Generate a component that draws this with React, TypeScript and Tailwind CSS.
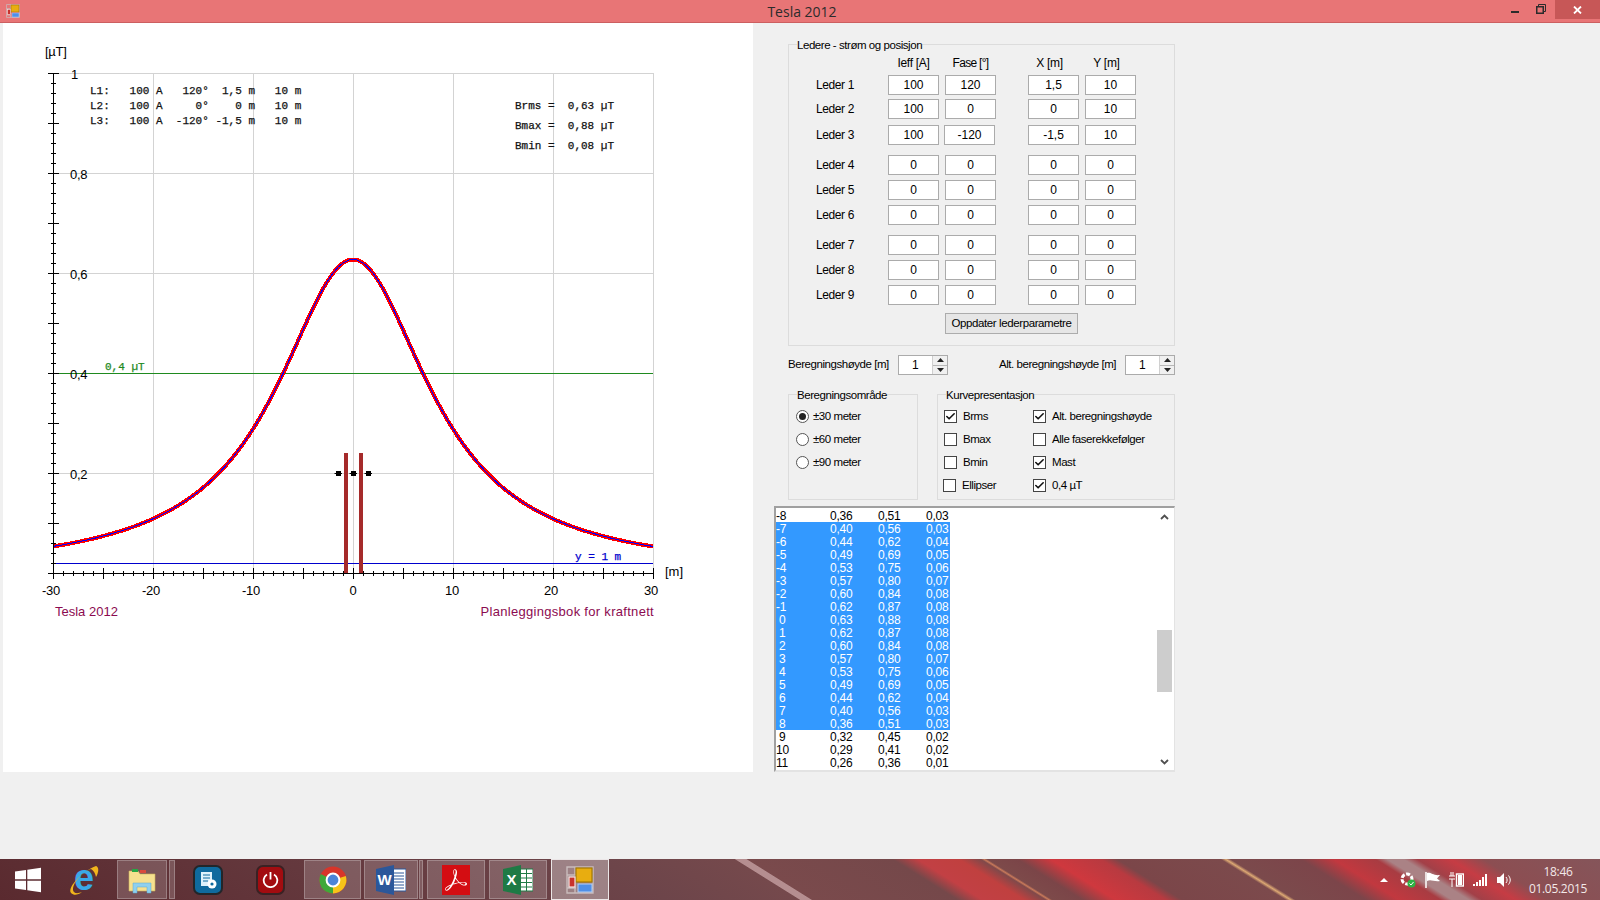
import { Check } from 'lucide-react'
import { SiAdobeacrobatreader } from 'react-icons/si'

const sans = "font-['Liberation_Sans',Arial,sans-serif]"

const leaders = [
  { name: 'Leder 1', h: 'h-[24px]', v: ['100', '120', '1,5', '10'] },
  { name: 'Leder 2', h: 'h-[26px]', v: ['100', '0', '0', '10'] },
  { name: 'Leder 3', h: 'h-[30px]', v: ['100', '-120', '-1,5', '10'] },
  { name: 'Leder 4', h: 'h-[25px]', v: ['0', '0', '0', '0'] },
  { name: 'Leder 5', h: 'h-[25px]', v: ['0', '0', '0', '0'] },
  { name: 'Leder 6', h: 'h-[30px]', v: ['0', '0', '0', '0'] },
  { name: 'Leder 7', h: 'h-[25px]', v: ['0', '0', '0', '0'] },
  { name: 'Leder 8', h: 'h-[25px]', v: ['0', '0', '0', '0'] },
  { name: 'Leder 9', h: 'h-[28px]', v: ['0', '0', '0', '0'] },
]

const rows = [
  ['-8', '0,36', '0,51', '0,03'],
  ['-7', '0,40', '0,56', '0,03'],
  ['-6', '0,44', '0,62', '0,04'],
  ['-5', '0,49', '0,69', '0,05'],
  ['-4', '0,53', '0,75', '0,06'],
  ['-3', '0,57', '0,80', '0,07'],
  ['-2', '0,60', '0,84', '0,08'],
  ['-1', '0,62', '0,87', '0,08'],
  ['0', '0,63', '0,88', '0,08'],
  ['1', '0,62', '0,87', '0,08'],
  ['2', '0,60', '0,84', '0,08'],
  ['3', '0,57', '0,80', '0,07'],
  ['4', '0,53', '0,75', '0,06'],
  ['5', '0,49', '0,69', '0,05'],
  ['6', '0,44', '0,62', '0,04'],
  ['7', '0,40', '0,56', '0,03'],
  ['8', '0,36', '0,51', '0,03'],
  ['9', '0,32', '0,45', '0,02'],
  ['10', '0,29', '0,41', '0,02'],
  ['11', '0,26', '0,36', '0,01'],
]

// field strength from three conductors, same maths as the program
function brms(x: number) {
  const cond = [
    { x: 1.5, ph: 120 },
    { x: 0, ph: 0 },
    { x: -1.5, ph: -120 },
  ]
  let xr = 0, xi = 0, yr = 0, yi = 0
  for (const c of cond) {
    const dx = x - c.x
    const dy = 9
    const r2 = dx * dx + dy * dy
    const k = (0.2 * 100) / r2
    const a = (c.ph * Math.PI) / 180
    xr += k * dy * Math.cos(a)
    xi += k * dy * Math.sin(a)
    yr += k * dx * Math.cos(a)
    yi += k * dx * Math.sin(a)
  }
  return Math.sqrt(xr * xr + xi * xi + yr * yr + yi * yi)
}

function curvePath() {
  let d = ''
  for (let x = -30; x <= 30; x += 0.25) {
    const px = 53 + (x + 30) * 10
    const py = 573 - brms(x) * 500
    d += (d ? 'L' : 'M') + px.toFixed(1) + ' ' + py.toFixed(1)
  }
  return d
}

function Chart() {
  const gx = [153, 253, 353, 453, 553, 653]
  const gy = [73, 173, 273, 373, 473]
  const xTicks = Array.from({ length: 61 }, (_, i) => 53 + i * 10)
  const yTicks = Array.from({ length: 51 }, (_, i) => 73 + i * 10)
  const lbl = { fontFamily: 'Liberation Sans, Arial, sans-serif', fontSize: 13, letterSpacing: -0.3, fill: '#000' }
  const mono = { fontFamily: 'Liberation Mono, monospace', fontSize: 11, fill: '#111', stroke: '#111', strokeWidth: 0.25 }
  const foot = { fontFamily: 'Liberation Sans, Arial, sans-serif', fontSize: 13, fill: '#8b0a50' }
  return (
    <svg width="750" height="749" viewBox="3 23 750 749" className="block">
      {gx.map((x) => <line key={x} x1={x + 0.5} y1="73" x2={x + 0.5} y2="573" stroke="#d3d3d3" />)}
      {gy.map((y) => <line key={y} x1="53" y1={y + 0.5} x2="654" y2={y + 0.5} stroke="#d3d3d3" />)}

      <line x1="53" y1="373.5" x2="653" y2="373.5" stroke="#1f8a1f" />
      <line x1="53" y1="563.5" x2="653" y2="563.5" stroke="#0000cd" />

      <path d={curvePath()} fill="none" stroke="#ff0000" strokeWidth="4" shapeRendering="crispEdges" />
      <path d={curvePath()} fill="none" stroke="#0000ff" strokeWidth="1" shapeRendering="crispEdges" />

      <rect x="344" y="453" width="4" height="120" fill="#a52a2a" />
      <rect x="359" y="453" width="4" height="120" fill="#a52a2a" />
      {[338, 353, 368].map((x) => (
        <g key={x}>
          <rect x={x - 2} y="471" width="5" height="5" fill="#000" />
          <line x1={x - 3.5} y1="473.5" x2={x + 4} y2="473.5" stroke="#000" />
        </g>
      ))}

      <line x1="53.5" y1="73" x2="53.5" y2="574" stroke="#000" />
      <line x1="48" y1="573.5" x2="654" y2="573.5" stroke="#000" />
      {yTicks.map((y, i) => (
        <line key={y} x1={i % 5 === 0 ? 48 : 51} x2={i % 5 === 0 ? 59 : 56} y1={y + 0.5} y2={y + 0.5} stroke="#000" />
      ))}
      {xTicks.map((x, i) => (
        <line key={x} x1={x + 0.5} x2={x + 0.5} y1={i % 5 === 0 ? 568 : 571} y2={i % 5 === 0 ? 579 : 576} stroke="#000" />
      ))}

      <text x="45" y="56" style={lbl}>[µT]</text>
      <text x="71" y="79" style={lbl}>1</text>
      <text x="70" y="179" style={lbl}>0,8</text>
      <text x="70" y="279" style={lbl}>0,6</text>
      <text x="70" y="379" style={lbl}>0,4</text>
      <text x="70" y="479" style={lbl}>0,2</text>

      {[-30, -20, -10, 0, 10, 20, 30].map((v, i) => (
        <text key={v} x={v === 0 ? 353 : v === 10 ? 452 : 51 + i * 100} y="595" textAnchor="middle" style={lbl}>{v}</text>
      ))}
      <text x="665" y="576" style={{ ...lbl, letterSpacing: 0 }}>[m]</text>

      <text x="55" y="616" style={foot}>Tesla 2012</text>
      <text x="654" y="616" textAnchor="end" style={{ ...foot, letterSpacing: 0.3 }}>Planleggingsbok for kraftnett</text>

      <text x="90" y="94" xmlSpace="preserve" style={mono}>{'L1:   100 A   120°  1,5 m   10 m'}</text>
      <text x="90" y="109" xmlSpace="preserve" style={mono}>{'L2:   100 A     0°    0 m   10 m'}</text>
      <text x="90" y="124" xmlSpace="preserve" style={mono}>{'L3:   100 A  -120° -1,5 m   10 m'}</text>

      <text x="515" y="109" xmlSpace="preserve" style={mono}>{'Brms =  0,63 µT'}</text>
      <text x="515" y="129" xmlSpace="preserve" style={mono}>{'Bmax =  0,88 µT'}</text>
      <text x="515" y="149" xmlSpace="preserve" style={mono}>{'Bmin =  0,08 µT'}</text>

      <text x="105" y="370" style={{ ...mono, fill: '#1f8a1f', stroke: '#1f8a1f' }}>0,4 µT</text>
      <text x="575" y="560" style={{ ...mono, fill: '#0000cd', stroke: '#0000cd' }}>y = 1 m</text>
    </svg>
  )
}

function Field({ value, className = '' }: { value: string; className?: string }) {
  return (
    <div className={`w-[51px] h-[20px] bg-white border border-[#ababab] flex items-center justify-center text-[12px] text-black ${className}`}>
      {value}
    </div>
  )
}

function Spin({ value }: { value: string }) {
  return (
    <div className="w-[50px] h-[20px] bg-white border border-[#ababab] flex items-center">
      <span className="w-[32px] text-center text-[12px]">{value}</span>
      <div className="ml-auto w-[15px] h-full flex flex-col border-l border-[#d0d0d0] bg-[#f0f0f0]">
        <span className="flex-1 flex items-center justify-center border-b border-[#b8b8b8]">
          <svg width="7" height="4"><path d="M3.5 0L7 4H0z" fill="#222" /></svg>
        </span>
        <span className="flex-1 flex items-center justify-center">
          <svg width="7" height="4"><path d="M0 0H7L3.5 4z" fill="#222" /></svg>
        </span>
      </div>
    </div>
  )
}

function Radio({ label, on }: { label: string; on?: boolean }) {
  return (
    <div className="h-[23px] flex items-center gap-[4px] text-[11.5px]">
      <span className="w-[13px] h-[13px] rounded-full border border-[#555] bg-white flex items-center justify-center">
        {on && <span className="w-[7px] h-[7px] rounded-full bg-[#222]" />}
      </span>
      {label}
    </div>
  )
}

function Box({ label, on, className = '' }: { label: string; on?: boolean; className?: string }) {
  return (
    <div className={`h-[23px] flex items-center gap-[6px] text-[11.5px] whitespace-nowrap ${className}`}>
      <span className="w-[13px] h-[13px] border border-[#444] bg-white flex items-center justify-center">
        {on && <Check size={11} strokeWidth={3.5} color="#111" />}
      </span>
      {label}
    </div>
  )
}

function AppGlyph({ size }: { size: number }) {
  return (
    <svg width={size} height={size} viewBox="0 0 14 14">
      <path d="M.5 .5H13.5V13.5H.5zM.5 4.5H6M4.5 .5V4.5M.5 11H5M4.5 11V13.5M7 11H13.5" fill="none" stroke="#c9bcbc" strokeWidth=".7" />
      <rect x="5" y="1" width="8" height="7" fill="#e8ad10" stroke="#a57a00" strokeWidth=".6" />
      <rect x="1.5" y="5.5" width="3" height="5" fill="#c9322c" stroke="#f5e5e5" strokeWidth=".6" />
      <rect x="6" y="9" width="7" height="4" fill="#4f8fe8" stroke="#b7d0f2" strokeWidth=".5" />
    </svg>
  )
}

function TitleBar() {
  return (
    <div className="h-[23px] bg-[#e87576] border-b border-[#cc5f60] flex items-center relative">
      <span className="ml-[6px]"><AppGlyph size={14} /></span>
      <span className="absolute left-0 right-0 pl-[4px] text-center text-[14px] text-[#2b2b2b] font-['Open_Sans',sans-serif]">Tesla 2012</span>
      <div className="ml-auto flex items-center h-full relative">
        <span className="w-[8px] h-[2px] bg-[#2b2b2b] mr-[17px] mt-[2px]" />
        <svg className="mr-[9px] mb-[4px]" width="10" height="10" viewBox="0 0 10 10">
          <path d="M2.5 2.5V.5H9.5V7.5H8" fill="none" stroke="#2b2b2b" />
          <rect x=".75" y="2.75" width="6.5" height="6.5" fill="none" stroke="#2b2b2b" strokeWidth="1.5" />
        </svg>
        <div className="w-[45px] h-[19px] self-start bg-[#c75757] flex items-center justify-center">
          <svg width="9" height="8" viewBox="0 0 9 8"><path d="M1 .5L8 7.5M8 .5L1 7.5" stroke="#fff" strokeWidth="1.8" /></svg>
        </div>
      </div>
    </div>
  )
}

const pinned = 'h-[39px] bg-[#ffffff2b] border border-[#ffffff40] flex items-center justify-center'

function Taskbar() {
  return (
    <div className="h-[41px] flex items-center bg-[linear-gradient(32deg,#5a2a2f_0%,#6d454a_40%,#75494c_48%,#b58e90_48.1%,#b58e90_48.7%,#7a4a4c_48.8%,#75484a_57.5%,#c24044_59%,#c0403f_61.5%,#80494a_62.8%,#c8795a_63%,#7d4a4a_63.2%,#7b4548_65%,#cf383e_67%,#b83a40_70%,#7b4649_71%,#7c4a4c_77.2%,#dca873_77.5%,#7b4a4c_77.8%,#7c454a_82%,#c2383f_84%,#a83c42_86.5%,#aa8285_87.2%,#aa8285_88.2%,#a24048_89%,#c63c44_91%,#8c4e52_93%,#85555a_100%)]">
      <div className="w-[56px] flex justify-center">
        <svg width="26" height="26" viewBox="0 0 26 26">
          <path d="M0 4.5L11 3V12.3H0zM12.3 2.8L26 .8V12.3H12.3zM0 13.7H11V23L0 21.5zM12.3 13.7H26V25.2L12.3 23.2z" fill="#fff" />
        </svg>
      </div>
      <div className="w-[56px] flex justify-center">
        <svg className="overflow-visible" width="32" height="32" viewBox="0 0 32 32">
          <text x="16" y="26" textAnchor="middle" fontFamily="Liberation Sans" fontWeight="700" fontSize="36" fill="#39a9e8">e</text>
          <path d="M3 29C-1 23 15 7 28 2c3 1 3 6 0 11-1-4-2-6-5-8C12 9 2 23 6 28c2 2 5 1 8 0-4 3-8 4-11 1z" fill="#f1b51c" />
        </svg>
      </div>
      <div className={`w-[50px] ml-[5px] ${pinned}`}>
        <svg width="28" height="28" viewBox="0 0 28 28">
          <path d="M1 5H10L12 8H27V25H1z" fill="#f6e08f" stroke="#cdb35a" strokeWidth=".6" />
          <rect x="4" y="3" width="6" height="3" fill="#27a745" />
          <rect x="12" y="4" width="6" height="3" fill="#d94a3d" />
          <path d="M5 27V17H23V27H19V21H9V27z" fill="#8fd0ee" stroke="#5aa8d0" strokeWidth=".5" />
        </svg>
      </div>
      <span className={`w-[6px] ml-[2px] ${pinned}`} />
      <div className="w-[62px] ml-[2px] flex justify-center">
        <div className="w-[30px] h-[30px] rounded-[7px] bg-[#0f6a9e] border-[2px] border-[#22262a] flex items-center justify-center">
          <svg width="20" height="20" viewBox="0 0 20 20">
            <rect x="3" y="2" width="11" height="14" fill="#dff2fb" />
            <path d="M5 5H12M5 8H12M5 11H10" stroke="#0f6a9e" />
            <circle cx="14" cy="14" r="4.5" fill="#fff" />
            <circle cx="14" cy="14" r="1.6" fill="#0f6a9e" />
          </svg>
        </div>
      </div>
      <div className="w-[62px] flex justify-center">
        <div className="w-[29px] h-[30px] rounded-[7px] bg-[#a30c10] border-[2px] border-[#3a2224] flex items-center justify-center">
          <svg width="17" height="17" viewBox="0 0 17 17">
            <path d="M5 3.5a6.8 6.8 0 1 0 7 0" fill="none" stroke="#fff" strokeWidth="1.8" />
            <path d="M8.5 1V8.5" stroke="#fff" strokeWidth="1.8" />
          </svg>
        </div>
      </div>
      <div className={`w-[57px] ml-[3px] ${pinned}`}>
        <svg width="28" height="28" viewBox="0 0 28 28">
          <circle cx="14" cy="14" r="13.5" fill="#d8352a" />
          <path d="M14 14L26.8 10A13.5 13.5 0 0 1 14 27.5z" fill="#f6c419" />
          <path d="M14 14L14 27.5A13.5 13.5 0 0 1 1.8 8z" fill="#3fa83a" />
          <circle cx="14" cy="14" r="6.4" fill="#4b84d8" stroke="#fff" strokeWidth="2" />
        </svg>
      </div>
      <div className={`w-[54px] ml-[3px] ${pinned}`}>
        <svg width="30" height="30" viewBox="0 0 30 30">
          <rect x="11" y="4" width="19" height="22" fill="#fff" stroke="#2b579a" />
          <path d="M18 8H28M18 11H28M18 14H28M18 17H28M18 20H28M18 23H28" stroke="#2b579a" />
          <path d="M0 4L18 0V30L0 26z" fill="#2b579a" />
          <text x="8.5" y="20" textAnchor="middle" fontFamily="Liberation Sans" fontWeight="700" fontSize="15" fill="#fff">W</text>
        </svg>
      </div>
      <span className={`w-[4px] ml-[1px] ${pinned}`} />
      <div className={`w-[58px] ml-[4px] ${pinned}`}>
        <div className="w-[28px] h-[30px] bg-[#d40d12] flex items-center justify-center">
          <SiAdobeacrobatreader size={22} color="#fff" />
        </div>
      </div>
      <div className={`w-[58px] ml-[4px] ${pinned}`}>
        <svg width="30" height="30" viewBox="0 0 30 30">
          <rect x="11" y="4" width="19" height="22" fill="#fff" stroke="#1f7a45" />
          <path d="M18 8.5H29M18 13H29M18 17.5H29M18 22H29M23.5 4V26" stroke="#1f7a45" />
          <path d="M0 4L18 0V30L0 26z" fill="#1f7a45" />
          <text x="8.5" y="20" textAnchor="middle" fontFamily="Liberation Sans" fontWeight="700" fontSize="15" fill="#fff">X</text>
        </svg>
      </div>
      <div className="w-[58px] h-[41px] ml-[4px] bg-[#ffffff55] border border-[#ffffffcc] flex items-center justify-center">
        <AppGlyph size={28} />
      </div>

      <div className="ml-auto flex items-center text-white">
        <span className="w-[24px] flex justify-center">
          <span className="w-0 h-0 border-l-[4px] border-r-[4px] border-b-[4px] border-l-transparent border-r-transparent border-b-white" />
        </span>
        <span className="w-[24px] flex justify-center">
          <svg width="16" height="16" viewBox="0 0 16 16">
            <circle cx="7" cy="7" r="5" fill="none" stroke="#fff" strokeWidth="3" strokeDasharray="4 1.5" />
            <circle cx="11.5" cy="11.5" r="4" fill="#2fb344" />
            <path d="M9.5 11.5L11 13L13.5 10" stroke="#fff" fill="none" />
          </svg>
        </span>
        <span className="w-[24px] flex justify-center">
          <svg width="15" height="16" viewBox="0 0 15 16">
            <path d="M1 0V16" stroke="#fff" strokeWidth="1.5" />
            <path d="M2 1C6 0 8 4 15 3L12 6.5L15 9C9 10 6 7 2 9z" fill="#fff" />
          </svg>
        </span>
        <span className="w-[24px] flex justify-center">
          <svg width="15" height="15" viewBox="0 0 15 15">
            <path d="M0 4H6M0 7H6M2 0V4M4 0V4M3 7V15" stroke="#fff" fill="none" />
            <rect x="7.5" y="2" width="7" height="12" fill="none" stroke="#fff" strokeWidth="1.4" />
            <rect x="9" y="3" width="4" height="10" fill="#fff" />
          </svg>
        </span>
        <span className="w-[24px] flex justify-center">
          <svg width="15" height="12" viewBox="0 0 15 12">
            <path d="M0 10h2v2H0zM3 8h2v4H3zM6 6h2v6H6zM9 3h2v9H9zM12 0h2v12h-2z" fill="#fff" />
          </svg>
        </span>
        <span className="w-[24px] flex justify-center">
          <svg width="15" height="14" viewBox="0 0 15 14">
            <path d="M0 4H3L7 0V14L3 10H0z" fill="#fff" />
            <path d="M9 4c1.5 2 1.5 4 0 6M11.5 2.5c2.3 3 2.3 6 0 9" fill="none" stroke="#fff" />
          </svg>
        </span>
        <div className="w-[84px] pt-[1px] text-center text-[12px] leading-[17px] tracking-[-0.3px] text-[#f3e9e9] font-['Open_Sans',sans-serif]">
          <div>18:46</div>
          <div>01.05.2015</div>
        </div>
      </div>
    </div>
  )
}

export default function App() {
  return (
    <div className={`w-[1600px] h-[900px] overflow-hidden bg-[#f0f0f0] flex flex-col text-black ${sans}`}>
      <TitleBar />
      <div className="h-[836px] flex">
        <div className="ml-[3px] w-[750px] h-[749px] bg-white shrink-0">
          <Chart />
        </div>

        <div className="ml-[35px] w-[387px] pt-[14px] flex flex-col">
          {/* ledere */}
          <fieldset className="h-[309px] border border-[#dcdcdc] pl-[8px]">
            <legend className="translate-y-[1px] text-[11.5px] leading-[14px] tracking-[-0.45px]">Ledere - strøm og posisjon</legend>
            <div className="mt-[4px] pl-[91px] h-[16px] flex items-center text-[12px] tracking-[-0.3px]">
              <span className="w-[51px] text-center">Ieff [A]</span>
              <span className="w-[51px] ml-[6px] text-center tracking-[-0.7px]">Fase [°]</span>
              <span className="w-[51px] ml-[28px] text-center">X [m]</span>
              <span className="w-[51px] ml-[6px] text-center">Y [m]</span>
            </div>
            <div className="mt-[4px]">
              {leaders.map((l, i) => (
                <div key={l.name} className={`${l.h} flex items-start`}>
                  <span className="w-[91px] pl-[19px] h-[20px] flex items-center text-[12px] tracking-[-0.4px]">{l.name}</span>
                  <Field value={l.v[0]} />
                  <Field value={l.v[1]} className={i === 2 ? 'ml-[5px] mr-[1px]' : 'ml-[6px]'} />
                  <Field value={l.v[2]} className="ml-[32px]" />
                  <Field value={l.v[3]} className="ml-[6px]" />
                </div>
              ))}
            </div>
            <button className="block ml-[148px] w-[133px] h-[21px] border border-[#acacac] bg-[#e6e6e6] text-[11.5px] tracking-[-0.4px]">Oppdater lederparametre</button>
          </fieldset>

          <div className="mt-[9px] h-[20px] flex items-center text-[11.5px] tracking-[-0.45px] whitespace-nowrap">
            <span className="w-[110px]">Beregningshøyde [m]</span>
            <Spin value="1" />
            <span className="ml-[51px] w-[126px]">Alt. beregningshøyde [m]</span>
            <Spin value="1" />
          </div>

          <div className="mt-[12px] flex gap-[19px] tracking-[-0.45px]">
            <fieldset className="w-[130px] h-[113px] border border-[#dcdcdc] pl-[7px] pt-[4px]">
              <legend className="translate-y-[1px] ml-[1px] text-[11.5px] leading-[14px]">Beregningsområde</legend>
              <Radio label="±30 meter" on />
              <Radio label="±60 meter" />
              <Radio label="±90 meter" />
            </fieldset>
            <fieldset className="w-[238px] h-[113px] border border-[#dcdcdc] pl-[6px] pt-[4px]">
              <legend className="translate-y-[1px] ml-[2px] text-[11.5px] leading-[14px]">Kurvepresentasjon</legend>
              <div className="grid grid-cols-[89px_1fr]">
                <Box label="Brms" on />
                <Box label="Alt. beregningshøyde" on />
                <Box label="Bmax" />
                <Box label="Alle faserekkefølger" />
                <Box label="Bmin" />
                <Box label="Mast" on />
                <Box label="Ellipser" className="-ml-[1px]" />
                <Box label="0,4 µT" on />
              </div>
            </fieldset>
          </div>

          <div className="mt-[6px] -ml-[14px] w-[401px] h-[266px] bg-white border-t-2 border-l-2 border-t-[#a0a0a0] border-l-[#a0a0a0] border-r border-b-2 border-r-[#e3e3e3] border-b-[#e3e3e3] flex overflow-hidden">
            <div className="flex-1 pt-[1px] overflow-hidden">
              {rows.map((r, i) => {
                const sel = i >= 1 && i <= 16
                const neg = r[0].startsWith('-') || r[0].length > 1
                return (
                  <div key={i} className={`w-[174px] h-[13px] flex text-[12px] leading-[15px] tracking-[-0.2px] ${sel ? 'bg-[#3399ff] text-white' : 'text-black'}`}>
                    <span className={`w-[54px] ${neg ? '' : 'pl-[3px]'}`}>{r[0]}</span>
                    <span className="w-[48px]">{r[1]}</span>
                    <span className="w-[48px]">{r[2]}</span>
                    <span>{r[3]}</span>
                  </div>
                )
              })}
            </div>
            <div className="w-[15px] h-full mr-[2px] flex flex-col items-center bg-white">
              <svg className="mt-[6px]" width="9" height="6" viewBox="0 0 9 6"><path d="M1 5L4.5 1.5L8 5" fill="none" stroke="#505050" strokeWidth="1.8" /></svg>
              <div className="mt-[110px] w-[15px] h-[62px] bg-[#cdcdcd]" />
              <svg className="mt-[auto] mb-[5px]" width="9" height="6" viewBox="0 0 9 6"><path d="M1 1L4.5 4.5L8 1" fill="none" stroke="#505050" strokeWidth="1.8" /></svg>
            </div>
          </div>
        </div>
      </div>
      <Taskbar />
    </div>
  )
}
